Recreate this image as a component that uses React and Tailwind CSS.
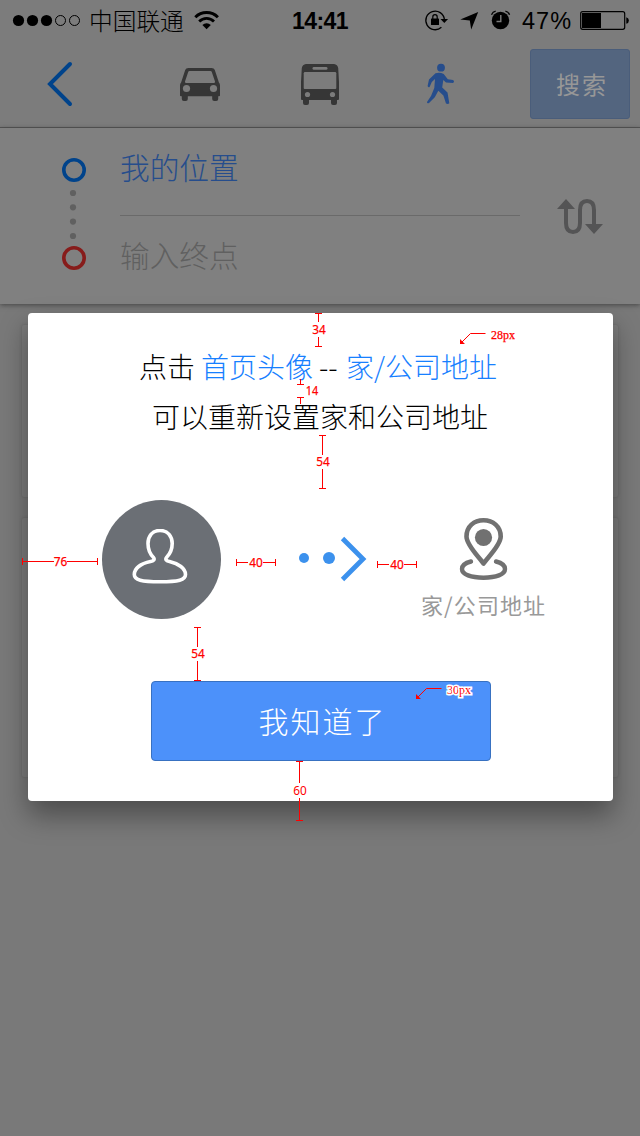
const FONT = 'font-["Liberation_Sans","Noto_Sans_CJK_SC",sans-serif]';
const CJK = 'font-["Noto_Sans_CJK_SC",sans-serif]';

function StatusBar() {
  return (
    <div className="flex h-10 items-center text-black">
      <svg className="ml-3 shrink-0" width="70" height="40" viewBox="12 0 70 40">
        <circle cx="18.5" cy="20.5" r="5.6" />
        <circle cx="32.5" cy="20.5" r="5.6" />
        <circle cx="46.5" cy="20.5" r="5.6" />
        <circle cx="60.5" cy="20.5" r="5" fill="none" stroke="#000" />
        <circle cx="74.5" cy="20.5" r="5" fill="none" stroke="#000" />
      </svg>
      <span className={`${CJK} ml-[7px] w-[98px] whitespace-nowrap text-[23.7px] font-light leading-10`}>中国联通</span>
      <svg className="ml-[6px] shrink-0" width="26" height="40" viewBox="193 0 26 40" fill="none" stroke="#000">
        <path d="M195.3 17.2a16 16 0 0 1 22.6 0" strokeWidth="3" />
        <path d="M199.2 21.4a10.4 10.4 0 0 1 14.8 0" strokeWidth="2.8" />
        <path d="M202.4 24.9a5.9 5.9 0 0 1 8.4 0L206.6 29.3z" fill="#000" stroke="none" />
      </svg>
      <span className="ml-[73px] w-[60px] pt-[2px] text-[23px] font-bold leading-10 tracking-[-0.6px]">14:41</span>
      <svg className="ml-[72px] shrink-0" width="90" height="40" viewBox="424 0 90 40">
        <path d="M444.4 19.5a9.3 9.3 0 1 0-3 7.8" fill="none" stroke="#000" strokeWidth="1.3" />
        <path d="M440.500 19h7.600l-3.800 4.100z" />
        <rect x="431" y="18.400" width="8" height="6.600" rx=".6" />
        <path d="M432.800 19v-2.100a2.200 2.200 0 0 1 4.400 0V19" fill="none" stroke="#000" strokeWidth="1.2" />
        <path d="M478.200 12 471.200 29.600 469.800 20.400 460.300 19.400z" />
        <circle cx="500.500" cy="20.500" r="8.700" />
        <path d="M491.500 14.800q1.200-3 4.200-3.600M505.400 11.200q3 .6 4.200 3.600" fill="none" stroke="#000" strokeWidth="1.3" />
        <path d="M500.800 15v6.500h-4.300" fill="none" stroke="#7c7c7c" strokeWidth="1.400" />
      </svg>
      <span className="ml-[8px] w-[56px] pt-[2px] text-[23.5px] leading-10 tracking-[1px]">47%</span>
      <svg className="ml-[2px] shrink-0" width="50" height="40" viewBox="580 0 50 40">
        <rect x="580.7" y="11.7" width="44" height="17.6" rx="2" fill="none" stroke="#000" strokeWidth="1.2" />
        <path d="M582 13h19v15H582zM626.3 17.2q2.6.8 2.6 3.3t-2.6 3.3z" />
      </svg>
    </div>
  );
}

function NavBar() {
  return (
    <div className="flex h-[88px] items-start border-b border-[#535353]">
      <svg className="ml-10 shrink-0" width="40" height="87" viewBox="40 40 40 87">
        <path d="M70 64 50 84 70 104" fill="none" stroke="#00438b" strokeWidth="4" strokeLinecap="round" />
      </svg>
      <svg className="ml-[96px] shrink-0" width="48" height="87" viewBox="176 40 48 87">
        <path fill="#363636" fillRule="evenodd" d="M188.500 68h23q2.600 0 3.300 2l4.100 12.500q1.100 1.200 1.100 3v10q0 .8-1 .8h-.8v2.700q0 2-2 2h-2q-2 0-2-2v-2.700h-24.400v2.700q0 2-2 2h-2q-2 0-2-2v-2.700H181q-1 0-1-.8V85.500q0-1.800 1.100-3l4.100-12.500q.7-2 3.300-2zM189.500 71q-1 0-1.300 1l-3.200 9.600q-.4 1.400 1 1.400h28q1.400 0 1-1.400L211.800 72q-.3-1-1.300-1z" />
        <circle cx="186.500" cy="88.500" r="3.600" fill="#7c7c7c" />
        <circle cx="213.500" cy="88.500" r="3.600" fill="#7c7c7c" />
      </svg>
      <svg className="ml-[72px] shrink-0" width="48" height="87" viewBox="296 40 48 87">
        <path fill="#363636" d="M306 64h28q3.600.7 4.200 4l.8 14v17q0 1-1 1h-1v3q0 2-2 2h-2q-2 0-2-2v-3h-22v3q0 2-2 2h-2q-2 0-2-2v-3h-1q-1 0-1-1V82l.8-14q.6-3.300 4.200-4z" />
        <rect x="312.500" y="67" width="15" height="2.800" rx="1.400" fill="#7c7c7c" />
        <path d="M305 72h30q1.200 0 1.300 1.200V88q0 1-1 1h-30.600q-1 0-1-1V73.200Q303.800 72 305 72z" fill="#7c7c7c" />
        <circle cx="307.500" cy="94.500" r="2.600" fill="#7c7c7c" />
        <circle cx="332.500" cy="94.500" r="2.600" fill="#7c7c7c" />
      </svg>
      <svg className="ml-[76px] shrink-0" width="40" height="87" viewBox="420 40 40 87">
        <g fill="#264d8c">
          <circle cx="441" cy="67.700" r="3.900" />
          <path d="M435.500 73.200Q440 72 443.700 74L447.800 79.300 453 79.900Q455 81.300 453 82.900L446 82.400 443.300 80 442.200 87.400 447.500 92.500 449.300 103.200Q448 104.600 446 103.600L443.400 95.400 438.300 90.800 434.800 97.200 429 102.900Q427 103.800 427 101.900L431 96 434.300 88 435 79 431.800 82 429.600 86.900Q428 87.700 427.600 86L429 79.600z" />
        </g>
      </svg>
      <button className={`${CJK} ml-[70px] mt-[9px] h-[70px] w-[100px] rounded-[3px] border border-[#4a5d7a] bg-[#53657f] pb-px pl-[4px] text-[24px] font-normal tracking-[2px] text-[#979797]`}>
        搜索
      </button>
    </div>
  );
}

function RouteForm() {
  return (
    <div className="relative flex h-[176px] bg-[#808080] shadow-[0_1px_5px_#444]">
      <svg className="ml-[60px] shrink-0" width="30" height="176" viewBox="60 128 30 176">
        <circle cx="74" cy="170" r="10.200" fill="none" stroke="#00438b" strokeWidth="3.600" />
        <circle cx="74" cy="258" r="10.200" fill="none" stroke="#871c1b" strokeWidth="3.600" />
        <g fill="#606060">
          <circle cx="73" cy="193" r="3.100" />
          <circle cx="73" cy="207.300" r="3.100" />
          <circle cx="73" cy="221.600" r="3.100" />
          <circle cx="73" cy="236" r="3.100" />
        </g>
      </svg>
      <div className={`${CJK} ml-[30px] w-[400px] text-[29.7px] font-light`}>
        <div className="h-[88px] border-b border-[#6a6a6a] leading-[78px] text-[#264d8c]">我的位置</div>
        <div className="h-[88px] leading-[78px] text-[#606060]">输入终点</div>
      </div>
      <svg className="ml-[34px] shrink-0" width="54" height="176" viewBox="554 128 54 176">
        <path d="M566 205v18q0 9 7 9t7-9v-13q0-9 7-9t7 9v18" fill="none" stroke="#545455" strokeWidth="4" />
        <path d="M557 209 566 199 575 209zM585 224h18l-9 10z" fill="#545455" />
      </svg>
    </div>
  );
}

function Dialog() {
  return (
    <div className="ml-7 mt-[313px] flex h-[488px] w-[585px] flex-col rounded-[4px] bg-white pt-[28px] shadow-[0_14px_28px_rgba(0,0,0,0.38)]">
      <p className={`${CJK} flex h-[50px] whitespace-pre pl-[111px] text-[28px] font-light leading-[50px] text-black`}>
        <span className="w-[62px]">点击</span>
        <span className="w-[118px] text-[#1780ff]">首页头像</span>
        <span className="w-[27px]">--</span>
        <span className="text-[#1780ff]">家/公司地址</span>
      </p>
      <p className={`${CJK} h-[50px] pl-[124px] text-[28px] font-light leading-[50px] text-black`}>可以重新设置家和公司地址</p>
      <div className="mt-[59px] flex h-[119px]">
        <div className="ml-[74px] flex size-[119px] shrink-0 items-center justify-center rounded-full bg-[#6b6f75]">
          <svg width="61" height="61" viewBox="131.500 529.500 61 61" fill="none" stroke="#fff" strokeWidth="3.600">
            <path d="M160.500 531C152.500 531 148.500 537 148.500 544C148.500 550 151 555 154 558C155.500 560 154 561.500 151 562C141 564 134.800 569 134.800 575C134.800 580.500 142 582.200 160.500 582.200S186 580.500 186 575C186 569 179 564 170 562C167 561.500 165.500 560 167 558C170 555 172.700 550 172.700 544C172.700 537 168.500 531 160.500 531z" />
          </svg>
        </div>
        <svg className="ml-[75px] shrink-0" width="74" height="119" viewBox="296 500 74 119">
          <circle cx="304" cy="558" r="5" fill="#3c91ed" />
          <circle cx="329" cy="558" r="6" fill="#3c91ed" />
          <path d="M342.500 538.500 363 559 342.500 579.500" fill="none" stroke="#3c91ed" strokeWidth="4.800" />
        </svg>
        <div className="ml-[49px] w-[130px] pt-[15px]">
          <svg className="ml-[36px]" width="56" height="68" viewBox="455 515 56 68" fill="none" stroke="#717171">
            <path d="M483.500 563.500C480 558 466.500 545.500 466.500 536.500C466.500 526.500 474 520.300 483.500 520.300S500.700 526.500 500.700 536.500C500.700 545.500 487 558 483.500 563.500z" strokeWidth="4.600" strokeLinejoin="round" />
            <circle cx="483.500" cy="537.500" r="8.600" fill="#717171" stroke="none" />
            <path d="M471 561.500C465 563 462 565.500 462 569C462 574.500 471 577.700 483.500 577.700S505 574.500 505 569C505 565.500 502 563 496 561.500" strokeWidth="4.400" strokeLinecap="round" />
          </svg>
          <div className={`${CJK} -mt-px ml-[2px] h-9 whitespace-nowrap text-[22px] leading-[45px] tracking-[1.1px] text-[#999]`}>家/公司地址</div>
        </div>
      </div>
      <button className={`${CJK} ml-[123px] mt-[62px] h-20 w-[340px] rounded-[4px] border border-[#3871c1] bg-[#4c91fa] pb-[2px] pl-[3px] text-[30px] font-light tracking-[2px] text-white`}>
        我知道了
      </button>
    </div>
  );
}

const VERTICAL_MEASURES = [
  { x: 318.5, from: 313.5, to: 346.5, gap: [322, 337], label: "34", tx: 319, ty: 334 },
  { x: 322.5, from: 435.5, to: 488.5, gap: [455, 469], label: "54", tx: 323, ty: 466 },
  { x: 197.500, from: 627.5, to: 680.5, gap: [647, 661], label: "54", tx: 198, ty: 658 },
  { x: 299.500, from: 761.5, to: 820.5, gap: [783, 798], label: "60", tx: 300, ty: 795 },
];
const HORIZONTAL_MEASURES = [
  { y: 561.5, from: 22.5, to: 97.5, gap: [54, 67], label: "76", tx: 60.500, ty: 566 },
  { y: 562.5, from: 236.5, to: 275.5, gap: [248, 263], label: "40", tx: 256, ty: 567 },
  { y: 564.5, from: 377.5, to: 416.5, gap: [389, 404], label: "40", tx: 397, ty: 569 },
];

function Measurements() {
  return (
    <svg className="pointer-events-none absolute left-0 top-0" width="640" height="1136" viewBox="0 0 640 1136">
      <g fill="none" stroke="#f00">
        {VERTICAL_MEASURES.map((m) => (
          <path key={m.from} d={`M${m.x - 3.5} ${m.from}h7M${m.x - 3.5} ${m.to}h7M${m.x} ${m.from}V${m.gap[0]}M${m.x} ${m.gap[1]}V${m.to}`} />
        ))}
        {HORIZONTAL_MEASURES.map((m) => (
          <path key={m.from} d={`M${m.from} ${m.y - 3.5}v7M${m.to} ${m.y - 3.5}v7M${m.from} ${m.y}H${m.gap[0]}M${m.gap[1]} ${m.y}H${m.to}`} />
        ))}
        <path d="M297 384.500h7M300.500 379v5M297 397.500h7M300.500 398v6" />
        <path d="M462 342 470.500 333.500H485.500M418 697 426.500 688.500H441.500" />
      </g>
      <path d="M460 339v5h5zM416 694v5h5z" fill="#f00" />
      <g className='font-["Noto_Sans",sans-serif] text-[12.5px]' fill="#f00" textAnchor="middle">
        {[...VERTICAL_MEASURES, ...HORIZONTAL_MEASURES].map((m) => (
          <text key={m.from} x={m.tx} y={m.ty} textLength="13.5" lengthAdjust="spacingAndGlyphs" stroke={m.label === "60" ? "#fff" : "#f00"} strokeWidth={m.label === "60" ? 2 : 0.25} paintOrder="stroke">{m.label}</text>
        ))}
        <text x="312" y="395" textLength="12.5" lengthAdjust="spacingAndGlyphs" stroke="#f00" strokeWidth=".25">14</text>
      </g>
      <g className='font-["Liberation_Serif",serif] text-[12px]' fill="#f00">
        <text x="491" y="339" textLength="24" stroke="#f00" strokeWidth=".25">28px</text>
        <text x="447" y="694" textLength="24" stroke="#fff" strokeWidth="3" paintOrder="stroke">30px</text>
      </g>
    </svg>
  );
}

export default function App() {
  return (
    <div className={`${FONT} relative h-[1136px] w-[640px] overflow-hidden bg-[#797979]`}>
      <div className="bg-[#7c7c7c]">
        <StatusBar />
        <NavBar />
      </div>
      <RouteForm />
      <div className="mx-[22px] mt-[21px] flex flex-col gap-[21px]">
        <div className="h-[172px] rounded-[2px] bg-[#7c7c7c] shadow-[0_0_3px_#666]" />
        <div className="h-[259px] rounded-[2px] bg-[#7c7c7c] shadow-[0_0_3px_#666]" />
      </div>
      <div className="absolute inset-0">
        <Dialog />
      </div>
      <Measurements />
    </div>
  );
}
